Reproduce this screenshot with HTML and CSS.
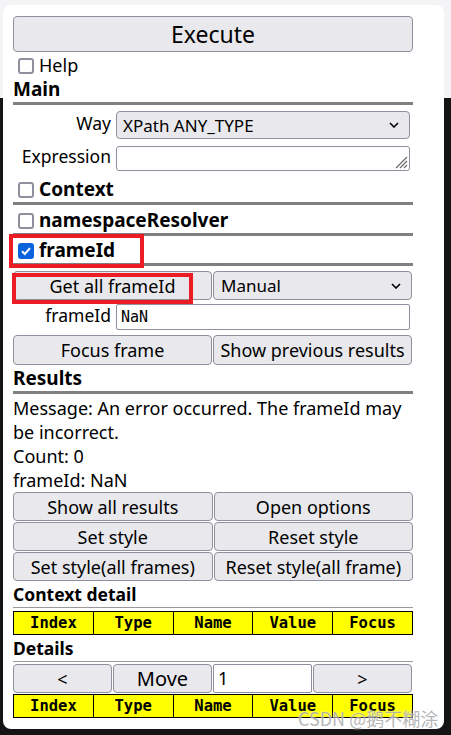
FILE: index.html
```html
<!DOCTYPE html>
<html lang="en">
<head>
<meta charset="utf-8">
<title>XPath Helper</title>
<link rel="stylesheet" href="styles.css">
</head>
<body>
<div class="popup">
  <button class="btn execute">Execute</button>
  <div class="check-row"><span class="cb"></span><span>Help</span></div>
  <div class="section-head main-head">Main</div>
  <div class="field-row way-row">
    <span class="field-label">Way</span>
    <div class="select">
      <span>XPath ANY_TYPE</span>
      <svg class="chev" width="10" height="6" viewBox="0 0 10 6"><path d="M1 1 L5 5 L9 1" fill="none" stroke="#000" stroke-width="1.6"/></svg>
    </div>
  </div>
  <div class="field-row expr-row">
    <span class="field-label">Expression</span>
    <div class="textarea">
      <svg class="grip" width="14" height="14" viewBox="0 0 14 14"><path d="M13 2 L2 13 M13 6 L6 13 M13 10 L10 13" stroke="#6b6b6b" stroke-width="1.2" fill="none"/></svg>
    </div>
  </div>
  <div class="section-head cb-head ctx-head"><span class="cb"></span>Context</div>
  <div class="section-head cb-head ns-head"><span class="cb"></span>namespaceResolver</div>
  <div class="section-head cb-head fid-head"><span class="cb checked"><svg width="12" height="12" viewBox="0 0 12 12"><path d="M2 6.3 L4.8 9 L10 3.2" fill="none" stroke="#fff" stroke-width="2"/></svg></span>frameId</div>
  <div class="pair-row get-row">
    <button class="btn">Get all frameId</button>
    <div class="select">
      <span>Manual</span>
      <svg class="chev" width="10" height="6" viewBox="0 0 10 6"><path d="M1 1 L5 5 L9 1" fill="none" stroke="#000" stroke-width="1.6"/></svg>
    </div>
  </div>
  <div class="field-row fid-row">
    <span class="field-label">frameId</span>
    <div class="input mono">NaN</div>
  </div>
  <div class="pair-row focus-row">
    <button class="btn">Focus frame</button>
    <button class="btn">Show previous results</button>
  </div>
  <div class="section-head results-head">Results</div>
  <div class="results-text">
    <div>Message: An error occurred. The frameId may be incorrect.</div>
    <div>Count: 0</div>
    <div>frameId: NaN</div>
  </div>
  <div class="btn-grid">
    <button class="btn">Show all results</button>
    <button class="btn">Open options</button>
    <button class="btn">Set style</button>
    <button class="btn">Reset style</button>
    <button class="btn">Set style(all frames)</button>
    <button class="btn">Reset style(all frame)</button>
  </div>
  <div class="section-head thin-head cd-head">Context detail</div>
  <table class="yellow-table">
    <tr><td>Index</td><td>Type</td><td>Name</td><td>Value</td><td>Focus</td></tr>
  </table>
  <div class="section-head thin-head det-head">Details</div>
  <div class="nav-row">
    <button class="btn">&lt;</button>
    <button class="btn move">Move</button>
    <div class="input">1</div>
    <button class="btn">&gt;</button>
  </div>
  <table class="yellow-table last-table">
    <tr><td>Index</td><td>Type</td><td>Name</td><td>Value</td><td>Focus</td></tr>
  </table>
  <div class="mark mark-a"></div>
  <div class="mark mark-b"></div>
  <div class="watermark">CSDN @鹅不糊涂</div>
</div>
</body>
</html>
```
FILE: styles.css
```css
html, body {
  margin: 0;
  padding: 0;
}
body {
  width: 451px;
  height: 735px;
  overflow: hidden;
  background: linear-gradient(to bottom, #f4f4f7 0, #f4f4f7 98px, #141414 98px);
  font-family: "Noto Sans", "Noto Sans CJK SC", sans-serif;
  font-size: 18px;
  line-height: 23px;
  color: #000;
}
.popup {
  position: relative;
  box-sizing: border-box;
  margin: 5px 0 0 3px;
  width: 441px;
  height: 724px;
  background: #fff;
  border-radius: 8px;
  padding: 11px 31px 0 10px;
}
.btn {
  display: block;
  box-sizing: border-box;
  margin: 0;
  padding: 0;
  background: #e9e9ed;
  border: 1px solid #8f8f9d;
  border-radius: 4px;
  font-family: inherit;
  font-size: 18px;
  color: #000;
  white-space: nowrap;
}
.execute {
  width: 100%;
  height: 36px;
  font-size: 23px;
}
.check-row {
  display: flex;
  align-items: center;
  margin-top: 2px;
  height: 23px;
}
.cb {
  flex: none;
  box-sizing: border-box;
  width: 16px;
  height: 16px;
  margin: 0 5px;
  border: 2px solid #8f8f9d;
  border-radius: 3px;
  background: #fff;
}
.cb.checked {
  display: flex;
  align-items: center;
  justify-content: center;
  background: #0b62dd;
  border-color: #0b62dd;
}
.section-head {
  font-weight: 700;
  font-size: 19px;
  line-height: 23px;
  padding-bottom: 1px;
  border-bottom: 3px solid #808080;
  white-space: nowrap;
}
.cb-head {
  display: flex;
  align-items: center;
}
.main-head { margin-top: 1px; }
.ctx-head { margin-top: 7px; }
.ns-head { margin-top: 4px; }
.fid-head { margin-top: 3px; }
.results-head { margin-top: 2px; }
.thin-head {
  font-size: 17.5px;
  border-bottom: 1px solid #9a9a9a;
}
.cd-head { margin-top: 2px; }
.det-head { margin-top: 2px; }

.field-row {
  display: grid;
  grid-template-columns: 98px 294px;
  column-gap: 5px;
  align-items: center;
}
.field-label {
  font-size: 17.5px;
  text-align: right;
  white-space: nowrap;
  position: relative;
  top: -2px;
}
.way-row { margin-top: 6px; height: 28px; }
.expr-row { margin-top: 7px; height: 25px; }
.fid-row { margin-top: 4px; height: 26px; }

.select {
  box-sizing: border-box;
  height: 100%;
  display: flex;
  align-items: center;
  justify-content: space-between;
  padding: 0 10px 0 6px;
  font-size: 17px;
  background: #e9e9ed;
  border: 1px solid #8f8f9d;
  border-radius: 4px;
}
.textarea {
  box-sizing: border-box;
  height: 100%;
  display: flex;
  align-items: flex-end;
  justify-content: flex-end;
  padding: 0 1px 1px 0;
  background: #fff;
  border: 1px solid #8f8f9d;
  border-radius: 3px;
}
.input {
  box-sizing: border-box;
  height: 100%;
  display: flex;
  align-items: center;
  padding-left: 4px;
  background: #fff;
  border: 1px solid #8f8f9d;
  border-radius: 2px;
}
.mono {
  font-family: "DejaVu Sans Mono", monospace;
  font-size: 15px;
}

.pair-row {
  display: grid;
  grid-template-columns: 199px 199px;
  column-gap: 1px;
}
.pair-row > * { height: 100%; }
.get-row { margin-top: 5px; height: 29px; }
.get-row .select { padding-left: 7px; }
.focus-row { margin-top: 5px; height: 30px; }

.results-text {
  margin-top: 2px;
  line-height: 24px;
}
.btn-grid {
  display: grid;
  grid-template-columns: 1fr 1fr;
  grid-auto-rows: 29px;
  gap: 1px;
}

.yellow-table {
  width: 100%;
  margin-top: 3px;
  border-collapse: collapse;
  table-layout: fixed;
}
.yellow-table td {
  height: 22px;
  padding: 0;
  border: 1px solid #000;
  background: #ffff00;
  text-align: center;
  font-family: "DejaVu Sans Mono", monospace;
  font-weight: 700;
  font-size: 15.5px;
  line-height: 22px;
}
.last-table { margin-top: 1px; }

.nav-row {
  margin-top: 2px;
  height: 29px;
  display: grid;
  grid-template-columns: 99px 99px 99px 99px;
  column-gap: 1px;
}
.nav-row > * { height: 100%; }
.move { font-size: 20px; }

.mark {
  position: absolute;
  box-sizing: border-box;
  border: 4px solid #ec1c24;
}
.mark-a { left: 6px; top: 229px; width: 135px; height: 34px; }
.mark-b { left: 9px; top: 268px; width: 181px; height: 31px; }

.watermark {
  position: absolute;
  left: 295px;
  top: 702px;
  font-family: "Noto Sans CJK SC", sans-serif;
  font-size: 18px;
  line-height: 22px;
  color: rgba(150, 150, 150, 0.7);
  text-shadow: 0 0 2px #fff;
  white-space: nowrap;
}
```
